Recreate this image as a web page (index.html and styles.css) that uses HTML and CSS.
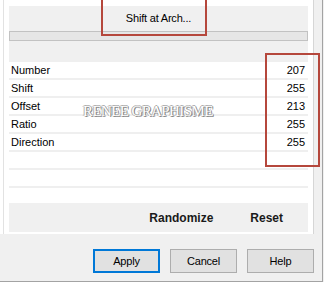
FILE: index.html
```html
<!DOCTYPE html>
<html lang="en">
<head>
    <meta charset="UTF-8">
    <meta name="viewport" content="width=device-width, initial-scale=1.0">
    <title>Shift at Arch</title>
    <link rel="stylesheet" href="styles.css">
</head>
<body>

<div class="dialog">
    <div class="panel">
        <div class="panel-inner">
            <!-- filter name + preview bar -->
            <div class="top">
                <div class="filter-name">Shift at Arch...</div>
                <div class="bar"></div>
            </div>

            <!-- parameter list -->
            <div class="rows">
                <div class="row"><span>Number</span><span>207</span></div>
                <div class="row"><span>Shift</span><span>255</span></div>
                <div class="row"><span>Offset</span><span>213</span></div>
                <div class="row"><span>Ratio</span><span>255</span></div>
                <div class="row"><span>Direction</span><span>255</span></div>
                <div class="row"></div>
                <div class="row"></div>
            </div>

            <div class="actions">
                <span>Randomize</span>
                <span>Reset</span>
            </div>
        </div>
    </div>

    <div class="footer">
        <button class="btn default">Apply</button>
        <button class="btn">Cancel</button>
        <button class="btn">Help</button>
    </div>

    <div class="watermark">RENEE GRAPHISME</div>
    <div class="mark mark-name"></div>
    <div class="mark mark-values"></div>
</div>

</body>
</html>
```

FILE: styles.css
```css
body {
    margin: 0;
    background-color: #f0f0f0;
    font-family: "Liberation Sans", Arial, sans-serif;
    font-size: 11px;
    color: #000;
}
.dialog {
    position: relative;
    width: 322px;
    height: 281px;
    border-right: 1px solid #a3a3a3;
    border-bottom: 1px solid #a3a3a3;
    overflow: hidden;
}
.panel {
    width: 310px;
    height: 234px;
    padding-left: 3px;
    background-color: #fff;
    border-right: 1px solid #d6d6d6;
}
.panel-inner {
    height: 100%;
    box-sizing: border-box;
    padding: 6px 5px 2px 5px;
    border-left: 1px solid #e2e2e2;
}
.top {
    height: 54px;
    background-color: #f0f0f0;
}
.filter-name {
    height: 25px;
    line-height: 24px;
    text-align: center;
    letter-spacing: -0.2px;
}
.bar {
    height: 8px;
    border: 1px solid #c2c2c2;
    background-color: #e6e6e6;
}
.rows {
    margin-bottom: 15px;
    border-bottom: 2px solid #efefef;
}
.row {
    display: flex;
    justify-content: space-between;
    align-items: center;
    height: 16px;
    padding: 0 3px 0 2px;
    border-top: 2px solid #efefef;
}
.actions {
    display: flex;
    justify-content: flex-end;
    align-items: center;
    gap: 37px;
    height: 29px;
    padding-right: 25px;
    background-color: #f0f0f0;
    font-size: 12px;
    font-weight: bold;
    color: #1a1a1a;
}
.footer {
    display: flex;
    justify-content: flex-end;
    gap: 10px;
    padding: 15px 8px 0 0;
}
.btn {
    width: 67px;
    height: 24px;
    padding: 0;
    background-color: #e1e1e1;
    border: 1px solid #adadad;
    font-family: "Liberation Sans", Arial, sans-serif;
    font-size: 11px;
    letter-spacing: -0.2px;
    color: #000;
}
.btn.default {
    border: 2px solid #0078d7;
}
.watermark {
    position: absolute;
    left: 83px;
    top: 103px;
    font-family: "Liberation Serif", "Times New Roman", serif;
    font-size: 15px;
    letter-spacing: -0.6px;
    color: #fff;
    text-shadow: 1px 1px 0 #8a8a8a, -1px 0 0 #b0b0b0, 0 -1px 0 #b0b0b0, 1px 0 0 #999;
}
.mark {
    position: absolute;
    box-sizing: border-box;
    border: 2px solid #b5473c;
}
.mark-name {
    left: 101px;
    top: -3px;
    width: 106px;
    height: 39px;
}
.mark-values {
    left: 265px;
    top: 53px;
    width: 55px;
    height: 114px;
}
```
